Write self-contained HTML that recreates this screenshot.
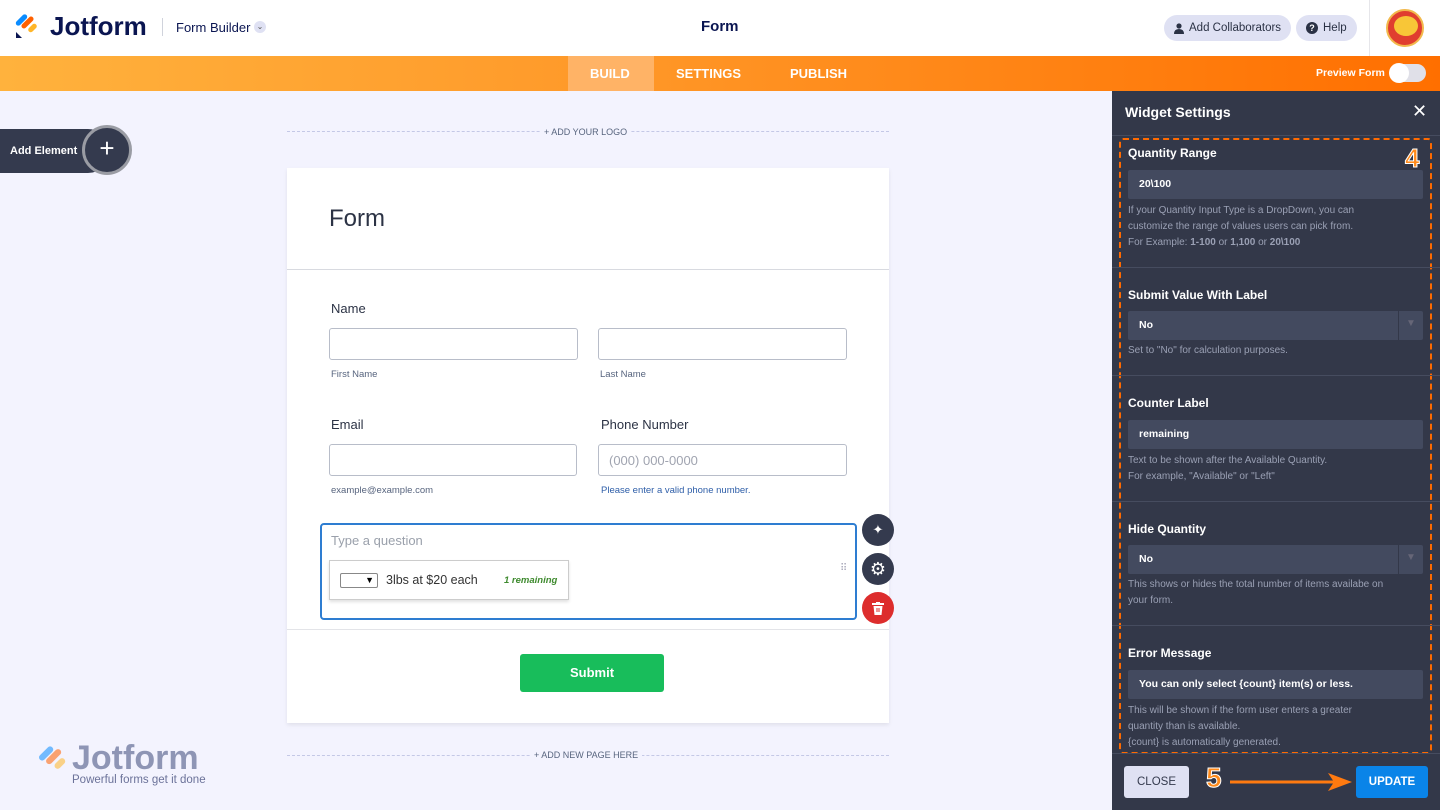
<!DOCTYPE html>
<html><head><meta charset="utf-8"><style>
*{box-sizing:border-box;margin:0;padding:0}
body{width:1440px;height:810px;overflow:hidden;font-family:"Liberation Sans",sans-serif;background:#f3f3fe;position:relative}
.abs{position:absolute}
.top{left:0;top:0;width:1440px;height:56px;background:#fff}
.bar{left:0;top:56px;width:1440px;height:35px;background:linear-gradient(90deg,#ffb23d,#ff9a2a 40%,#ff6f00)}
.pill{background:#dfe1f3;border-radius:14px;height:26px;font-size:11.5px;color:#2b3245;display:flex;align-items:center;gap:5px;padding:0 10px}
.lbl{font-size:13px;color:#2c3345}
.inp{border:1px solid #b8bdc9;border-radius:3px;background:#fff;height:32px}
.sub{font-size:9.5px;color:#57647e}
.panel{left:1112px;top:91px;width:328px;height:719px;background:#333849}
.pt{color:#fff;font-weight:bold;font-size:12px}
.pi{background:#434a5f;height:29px;color:#fff;font-size:10.5px;font-weight:bold;padding:8px 11px;border-radius:2px}
.ph{color:#9aa0b4;font-size:10px;line-height:16px}
.sep{height:1px;background:#464c5f;left:1112px;width:328px}
.circ{width:32px;height:32px;border-radius:50%;display:flex;align-items:center;justify-content:center}
</style></head><body>
<div class="abs top"></div>
<svg class="abs" style="left:15px;top:14px" width="24" height="24" viewBox="0 0 24 24"><rect x="4" y="-1" width="5" height="14" rx="2.5" transform="rotate(45 6.5 6)" fill="#0a8cff"/><rect x="10" y="1" width="5" height="15" rx="2.5" transform="rotate(45 12.5 8.5)" fill="#ff6100"/><rect x="15" y="9" width="5" height="10" rx="2.5" transform="rotate(45 17.5 14)" fill="#ffb629"/><path d="M1 18 L1 24 L7 24Z" fill="#0a1551"/></svg>
<div class="abs" style="left:50px;top:11px;font-size:26px;font-weight:bold;color:#0a1551;letter-spacing:0">Jotform</div>
<div class="abs" style="left:162px;top:18px;width:1px;height:18px;background:#d0d3dc"></div>
<div class="abs" style="left:176px;top:20px;font-size:13px;color:#0a1551">Form Builder</div>
<div class="abs" style="left:254px;top:21px;width:12px;height:12px;border-radius:50%;background:#dfe1f3;font-size:8px;color:#555;text-align:center;line-height:12px">⌄</div>
<div class="abs" style="left:701px;top:18px;font-size:15px;font-weight:bold;color:#0a1551">Form</div>
<div class="abs pill" style="left:1164px;top:15px"><svg width="10" height="11" viewBox="0 0 10 11"><circle cx="5" cy="3" r="2.6" fill="#2b3245"/><path d="M0 11 Q0 6 5 6 Q10 6 10 11Z" fill="#2b3245"/></svg>Add Collaborators</div>
<div class="abs pill" style="left:1296px;top:15px"><span style="width:12px;height:12px;border-radius:50%;background:#2b3245;color:#fff;font-size:9px;font-weight:bold;text-align:center;line-height:12px">?</span>Help</div>
<div class="abs" style="left:1369px;top:0;width:1px;height:56px;background:#e6e6ea"></div>
<div class="abs" style="left:1386px;top:9px;width:38px;height:38px;border-radius:50%;background:#e03e2f;border:2px solid #f2b94c;overflow:hidden"><div style="position:absolute;left:6px;top:5px;width:24px;height:20px;border-radius:50%;background:#f8c637"></div></div>
<div class="abs bar"></div>
<div class="abs" style="left:568px;top:56px;width:86px;height:35px;background:#ffb366"></div>
<div class="abs" style="left:590px;top:66px;font-size:13px;color:#fff;font-weight:bold">BUILD</div>
<div class="abs" style="left:676px;top:66px;font-size:13px;color:#fff;font-weight:bold">SETTINGS</div>
<div class="abs" style="left:790px;top:66px;font-size:13px;color:#fff;font-weight:bold">PUBLISH</div>
<div class="abs" style="left:1316px;top:67px;font-size:10.5px;font-weight:bold;color:#fff">Preview Form</div>
<div class="abs" style="left:1390px;top:64px;width:36px;height:18px;border-radius:9px;background:#e0e0e8"></div>
<div class="abs" style="left:1389px;top:63px;width:20px;height:20px;border-radius:50%;background:#fff"></div>

<div class="abs" style="left:0;top:129px;width:110px;height:44px;background:#343a4e;border-radius:0 22px 22px 0"></div>
<div class="abs" style="left:10px;top:145px;font-size:11px;font-weight:bold;color:#fff">Add Element</div>
<div class="abs" style="left:82px;top:125px;width:50px;height:50px;border-radius:50%;background:#343a4e;border:3px solid #9a9ca4;color:#fff;font-size:26px;text-align:center;line-height:40px;font-weight:300">+</div>

<div class="abs" style="left:287px;top:131px;width:602px;border-top:1px dashed #c4c8e6"></div>
<div class="abs" style="left:540px;top:127px;background:#f3f3fe;padding:0 4px;font-size:9px;color:#57647e">+ ADD YOUR LOGO</div>
<div class="abs" style="left:287px;top:168px;width:602px;height:555px;background:#fff;box-shadow:0 2px 4px rgba(0,0,0,.08)"></div>
<div class="abs" style="left:329px;top:205px;font-size:24px;color:#2c3345">Form</div>
<div class="abs" style="left:287px;top:269px;width:602px;height:1px;background:#d8dae0"></div>
<div class="abs lbl" style="left:331px;top:301px">Name</div>
<div class="abs inp" style="left:329px;top:328px;width:249px"></div>
<div class="abs inp" style="left:598px;top:328px;width:249px"></div>
<div class="abs sub" style="left:331px;top:369px">First Name</div>
<div class="abs sub" style="left:600px;top:369px">Last Name</div>
<div class="abs lbl" style="left:331px;top:417px">Email</div>
<div class="abs lbl" style="left:601px;top:417px">Phone Number</div>
<div class="abs inp" style="left:329px;top:444px;width:248px"></div>
<div class="abs inp" style="left:598px;top:444px;width:249px;font-size:13px;color:#a0a4b0;padding:8px 10px">(000) 000-0000</div>
<div class="abs sub" style="left:331px;top:485px">example@example.com</div>
<div class="abs sub" style="left:601px;top:485px;color:#2e5ea8">Please enter a valid phone number.</div>
<div class="abs" style="left:320px;top:523px;width:537px;height:97px;border:2px solid #2e7dd1;border-radius:4px"></div>
<div class="abs" style="left:331px;top:533px;font-size:13px;color:#9aa0ab">Type a question</div>
<div class="abs" style="left:329px;top:560px;width:240px;height:40px;border:1px solid #ccc;background:#fff;box-shadow:0 2px 3px rgba(0,0,0,.12)"></div>
<div class="abs" style="left:340px;top:573px;width:38px;height:15px;border:1px solid #888;border-radius:2px;font-size:9px;text-align:right;padding-right:3px;line-height:13px">▼</div>
<div class="abs" style="left:386px;top:573px;font-size:12.5px;color:#333">3lbs at $20 each</div>
<div class="abs" style="left:504px;top:575px;font-size:9.5px;color:#3e8a2e;font-style:italic;font-weight:bold">1 remaining</div>
<div class="abs" style="left:840px;top:566px;font-size:10px;color:#aab;line-height:5px">⠿</div>
<div class="abs circ" style="left:862px;top:514px;background:#343a4e;color:#fff;font-size:13px">✦</div>
<div class="abs circ" style="left:862px;top:553px;background:#343a4e;color:#fff;font-size:18px">⚙</div>
<div class="abs circ" style="left:862px;top:592px;background:#dd2d2d"><svg width="12" height="13" viewBox="0 0 12 13"><rect x="0" y="1" width="12" height="2" fill="#fff"/><rect x="4" y="0" width="4" height="2" fill="#fff"/><path d="M1.5 4 H10.5 L9.5 13 H2.5Z" fill="#fff"/><rect x="4.5" y="6" width="1" height="4" fill="#dd2d2d"/><rect x="6.5" y="6" width="1" height="4" fill="#dd2d2d"/></svg></div>
<div class="abs" style="left:287px;top:629px;width:602px;height:1px;background:#e3e4e8"></div>
<div class="abs" style="left:520px;top:654px;width:144px;height:38px;background:#18bd5b;border-radius:3px;color:#fff;font-size:13px;font-weight:bold;text-align:center;line-height:38px">Submit</div>
<div class="abs" style="left:287px;top:755px;width:602px;border-top:1px dashed #c4c8e6"></div>
<div class="abs" style="left:530px;top:750px;background:#f3f3fe;padding:0 4px;font-size:9px;color:#57647e">+ ADD NEW PAGE HERE</div>
<div class="abs" style="opacity:.55;font-size:34px;font-weight:bold;color:#3d4a7a;left:72px;top:739px">Jotform</div>
<div class="abs" style="left:38px;top:746px;opacity:.55"><svg width="30" height="30" viewBox="0 0 24 24"><rect x="4" y="-1" width="5" height="14" rx="2.5" transform="rotate(45 6.5 6)" fill="#0a8cff"/><rect x="10" y="1" width="5" height="15" rx="2.5" transform="rotate(45 12.5 8.5)" fill="#ff6100"/><rect x="15" y="9" width="5" height="10" rx="2.5" transform="rotate(45 17.5 14)" fill="#ffb629"/></svg></div>
<div class="abs" style="left:72px;top:774px;font-size:11.5px;color:#6b7299">Powerful forms get it done</div>

<div class="abs panel"></div>
<div class="abs" style="left:1125px;top:104px;color:#fff;font-weight:bold;font-size:14px">Widget Settings</div>
<div class="abs" style="left:1412px;top:101px;color:#fff;font-size:18px">✕</div>
<div class="abs sep" style="top:135px"></div>
<div class="abs" style="left:1119px;top:138px;width:313px;height:616px;border:2px dashed #ff6a00;border-radius:4px"></div>
<div class="abs" style="left:1405px;top:143px;font-size:26px;font-weight:bold;color:#ff8a1a;-webkit-text-stroke:1px #fff">4</div>
<div class="abs pt" style="left:1128px;top:146px">Quantity Range</div>
<div class="abs pi" style="left:1128px;top:170px;width:295px">20\100</div>
<div class="abs ph" style="left:1128px;top:203px">If your Quantity Input Type is a DropDown, you can<br>customize the range of values users can pick from.<br>For Example: <b>1-100</b> or <b>1,100</b> or <b>20\100</b></div>
<div class="abs sep" style="top:267px"></div>
<div class="abs pt" style="left:1128px;top:288px">Submit Value With Label</div>
<div class="abs pi" style="left:1128px;top:311px;width:295px">No</div>
<div class="abs" style="left:1398px;top:311px;width:1px;height:29px;background:#333849"></div>
<div class="abs" style="left:1406px;top:318px;color:#667;font-size:10px">▼</div>
<div class="abs ph" style="left:1128px;top:343px">Set to "No" for calculation purposes.</div>
<div class="abs sep" style="top:375px"></div>
<div class="abs pt" style="left:1128px;top:396px">Counter Label</div>
<div class="abs pi" style="left:1128px;top:420px;width:295px">remaining</div>
<div class="abs ph" style="left:1128px;top:453px">Text to be shown after the Available Quantity.<br>For example, "Available" or "Left"</div>
<div class="abs sep" style="top:501px"></div>
<div class="abs pt" style="left:1128px;top:522px">Hide Quantity</div>
<div class="abs pi" style="left:1128px;top:545px;width:295px">No</div>
<div class="abs" style="left:1398px;top:545px;width:1px;height:29px;background:#333849"></div>
<div class="abs" style="left:1406px;top:552px;color:#667;font-size:10px">▼</div>
<div class="abs ph" style="left:1128px;top:577px">This shows or hides the total number of items availabe on<br>your form.</div>
<div class="abs sep" style="top:625px"></div>
<div class="abs pt" style="left:1128px;top:646px">Error Message</div>
<div class="abs pi" style="left:1128px;top:670px;width:295px">You can only select {count} item(s) or less.</div>
<div class="abs ph" style="left:1128px;top:703px">This will be shown if the form user enters a greater<br>quantity than is available.<br>{count} is automatically generated.</div>
<div class="abs sep" style="top:753px"></div>
<div class="abs" style="left:1124px;top:766px;width:65px;height:32px;background:#dfe1f3;border-radius:3px;color:#343a4e;font-size:11.5px;text-align:center;line-height:32px">CLOSE</div>
<div class="abs" style="left:1206px;top:762px;font-size:28px;font-weight:bold;color:#ff8a1a;-webkit-text-stroke:1px #fff">5</div>
<svg class="abs" style="left:1228px;top:770px" width="130" height="24"><line x1="2" y1="12" x2="110" y2="12" stroke="#ff7a10" stroke-width="3"/><path d="M100 3 L124 12 L100 21 L106 12Z" fill="#ff7a10"/></svg>
<div class="abs" style="left:1356px;top:766px;width:72px;height:32px;background:#0a84e8;border-radius:3px;color:#fff;font-size:11.5px;font-weight:bold;text-align:center;line-height:32px">UPDATE</div>
</body></html>
